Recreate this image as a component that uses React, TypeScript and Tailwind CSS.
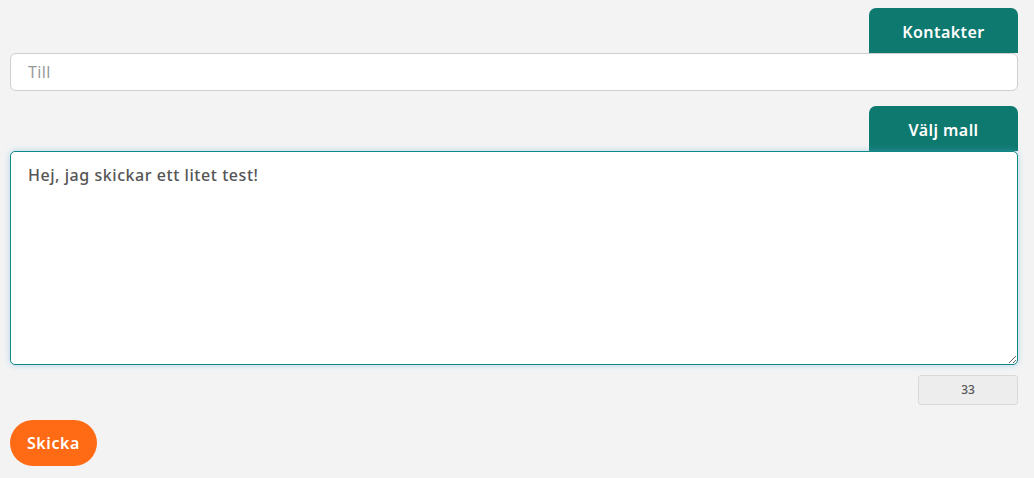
import React from "react";

export default function App() {
  const font = { fontFamily: '"Noto Sans", "Open Sans", sans-serif' };
  return (
    <div className="min-h-[478px] w-full bg-[#f3f3f3] px-[10px] pt-[8px] pb-[12px] text-[#555]" style={font}>
      <div className="flex flex-col w-[1008px]">
        <div className="flex justify-end">
          <button className="w-[149px] h-[45px] bg-[#0e796f] text-white font-semibold text-[16px] tracking-[0.45px] rounded-t-[7px] flex items-center justify-center pt-[2px]">
            Kontakter
          </button>
        </div>
        <input
          placeholder="Till"
          className="h-[38px] w-full bg-white border border-[#cfcfcf] rounded-[6px] pl-[17px] text-[16px] tracking-[0.4px] text-[#555] placeholder:text-[#9a9a9a] outline-none"
          style={font}
        />
        <div className="flex justify-end mt-[15px]">
          <button className="w-[149px] h-[45px] bg-[#0e796f] text-white font-semibold text-[16px] tracking-[0.45px] rounded-t-[7px] flex items-center justify-center pt-[2px]">
            Välj mall
          </button>
        </div>
        <textarea
          defaultValue="Hej, jag skickar ett litet test!"
          className="h-[214px] w-full bg-white border border-[#0e8a86] rounded-[5px] pl-[17px] pt-[12px] text-[16px] leading-[22px] tracking-[0.55px] font-medium text-[#555] outline-none shadow-[0_0_6px_rgba(102,175,233,0.45)] resize-y"
          style={font}
        />
        <div className="flex justify-end mt-[10px]">
          <div className="w-[100px] h-[30px] bg-[#ededed] border border-[#d9d9d9] rounded-[3px] flex items-center justify-center text-[12px] font-medium text-[#555]">
            33
          </div>
        </div>
        <div className="mt-[15px]">
          <button className="w-[87px] h-[46px] bg-[#ff6a14] text-white font-semibold text-[16px] tracking-[0.6px] rounded-full flex items-center justify-center">
            Skicka
          </button>
        </div>
      </div>
    </div>
  );
}
